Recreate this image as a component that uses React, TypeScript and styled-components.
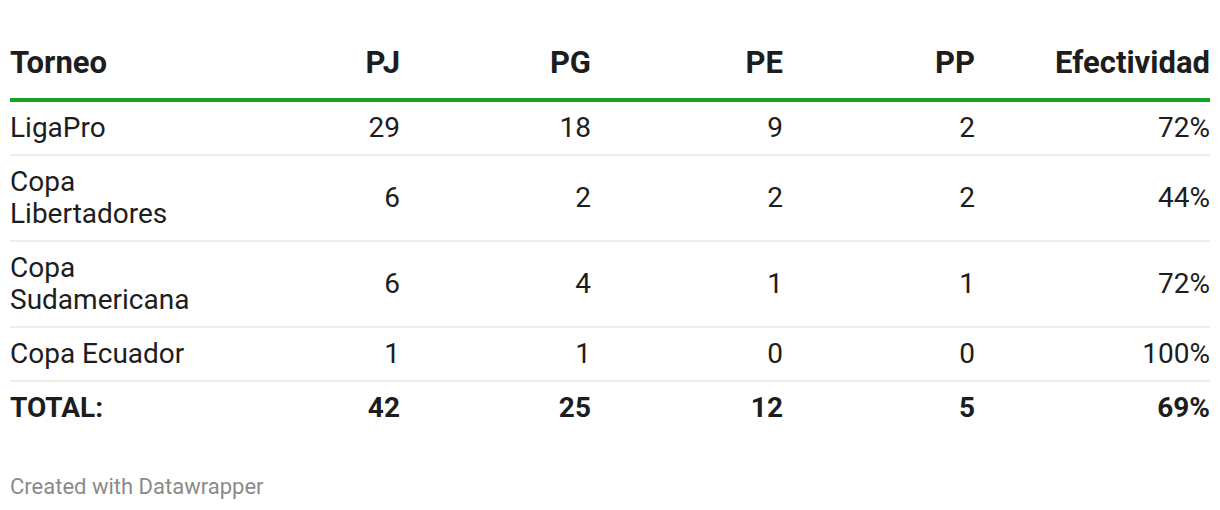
import { FC } from 'react'
import styled, { createGlobalStyle } from 'styled-components'

type Row = { name: string; pj: string; pg: string; pe: string; pp: string; ef: string }

const rows: Row[] = [
  { name: 'LigaPro', pj: '29', pg: '18', pe: '9', pp: '2', ef: '72%' },
  { name: 'Copa Libertadores', pj: '6', pg: '2', pe: '2', pp: '2', ef: '44%' },
  { name: 'Copa Sudamericana', pj: '6', pg: '4', pe: '1', pp: '1', ef: '72%' },
  { name: 'Copa Ecuador', pj: '1', pg: '1', pe: '0', pp: '0', ef: '100%' },
]

const total: Row = { name: 'TOTAL:', pj: '42', pg: '25', pe: '12', pp: '5', ef: '69%' }

const App: FC = () => (
  <>
    <GlobalStyle />
    <Wrapper>
      <Table>
        <HeaderRow>
          <HeadCell>Torneo</HeadCell>
          <HeadCell num>PJ</HeadCell>
          <HeadCell num>PG</HeadCell>
          <HeadCell num>PE</HeadCell>
          <HeadCell num>PP</HeadCell>
          <HeadCell num>Efectividad</HeadCell>
        </HeaderRow>
        {rows.map((r) => (
          <BodyRow key={r.name}>
            <NameCell>{r.name}</NameCell>
            <Cell num>{r.pj}</Cell>
            <Cell num>{r.pg}</Cell>
            <Cell num>{r.pe}</Cell>
            <Cell num>{r.pp}</Cell>
            <Cell num>{r.ef}</Cell>
          </BodyRow>
        ))}
        <BodyRow last>
          <Cell bold>{total.name}</Cell>
          <Cell num bold>{total.pj}</Cell>
          <Cell num bold>{total.pg}</Cell>
          <Cell num bold>{total.pe}</Cell>
          <Cell num bold>{total.pp}</Cell>
          <Cell num bold>{total.ef}</Cell>
        </BodyRow>
      </Table>
      <Footer>Created with Datawrapper</Footer>
    </Wrapper>
  </>
)

export default App

const GlobalStyle = createGlobalStyle`
  body {
    margin: 0;
    background: #fff;
    font-family: Roboto, "Liberation Sans", sans-serif;
    color: #1d1d1d;
  }
`

const Wrapper = styled.div`
  padding: 45px 10px 0;
  width: 1200px;
`

const Table = styled.div`
  display: flex;
  flex-direction: column;
`

const cols = '198px 192px 191px 192px 192px 235px'

const HeaderRow = styled.div`
  display: grid;
  grid-template-columns: ${cols};
  align-items: end;
  padding-bottom: 18px;
  border-bottom: 4px solid #14a325;
`

const BodyRow = styled.div<{ last?: boolean }>`
  display: grid;
  grid-template-columns: ${cols};
  align-items: center;
  padding: 10px 0;
  border-bottom: ${({ last }) => (last ? 'none' : '2px solid #ececec')};
`

const HeadCell = styled.div<{ num?: boolean }>`
  font-size: 31px;
  font-weight: 700;
  line-height: 35px;
  text-align: ${({ num }) => (num ? 'right' : 'left')};
`

const Cell = styled.div<{ num?: boolean; bold?: boolean }>`
  font-size: 28px;
  line-height: 32px;
  font-weight: ${({ bold }) => (bold ? 700 : 400)};
  text-align: ${({ num }) => (num ? 'right' : 'left')};
`

const NameCell = styled(Cell)`
  padding-right: 10px;
`

const Footer = styled.div`
  margin-top: 40px;
  font-size: 22px;
  line-height: 26px;
  color: #8a8a8a;
`
